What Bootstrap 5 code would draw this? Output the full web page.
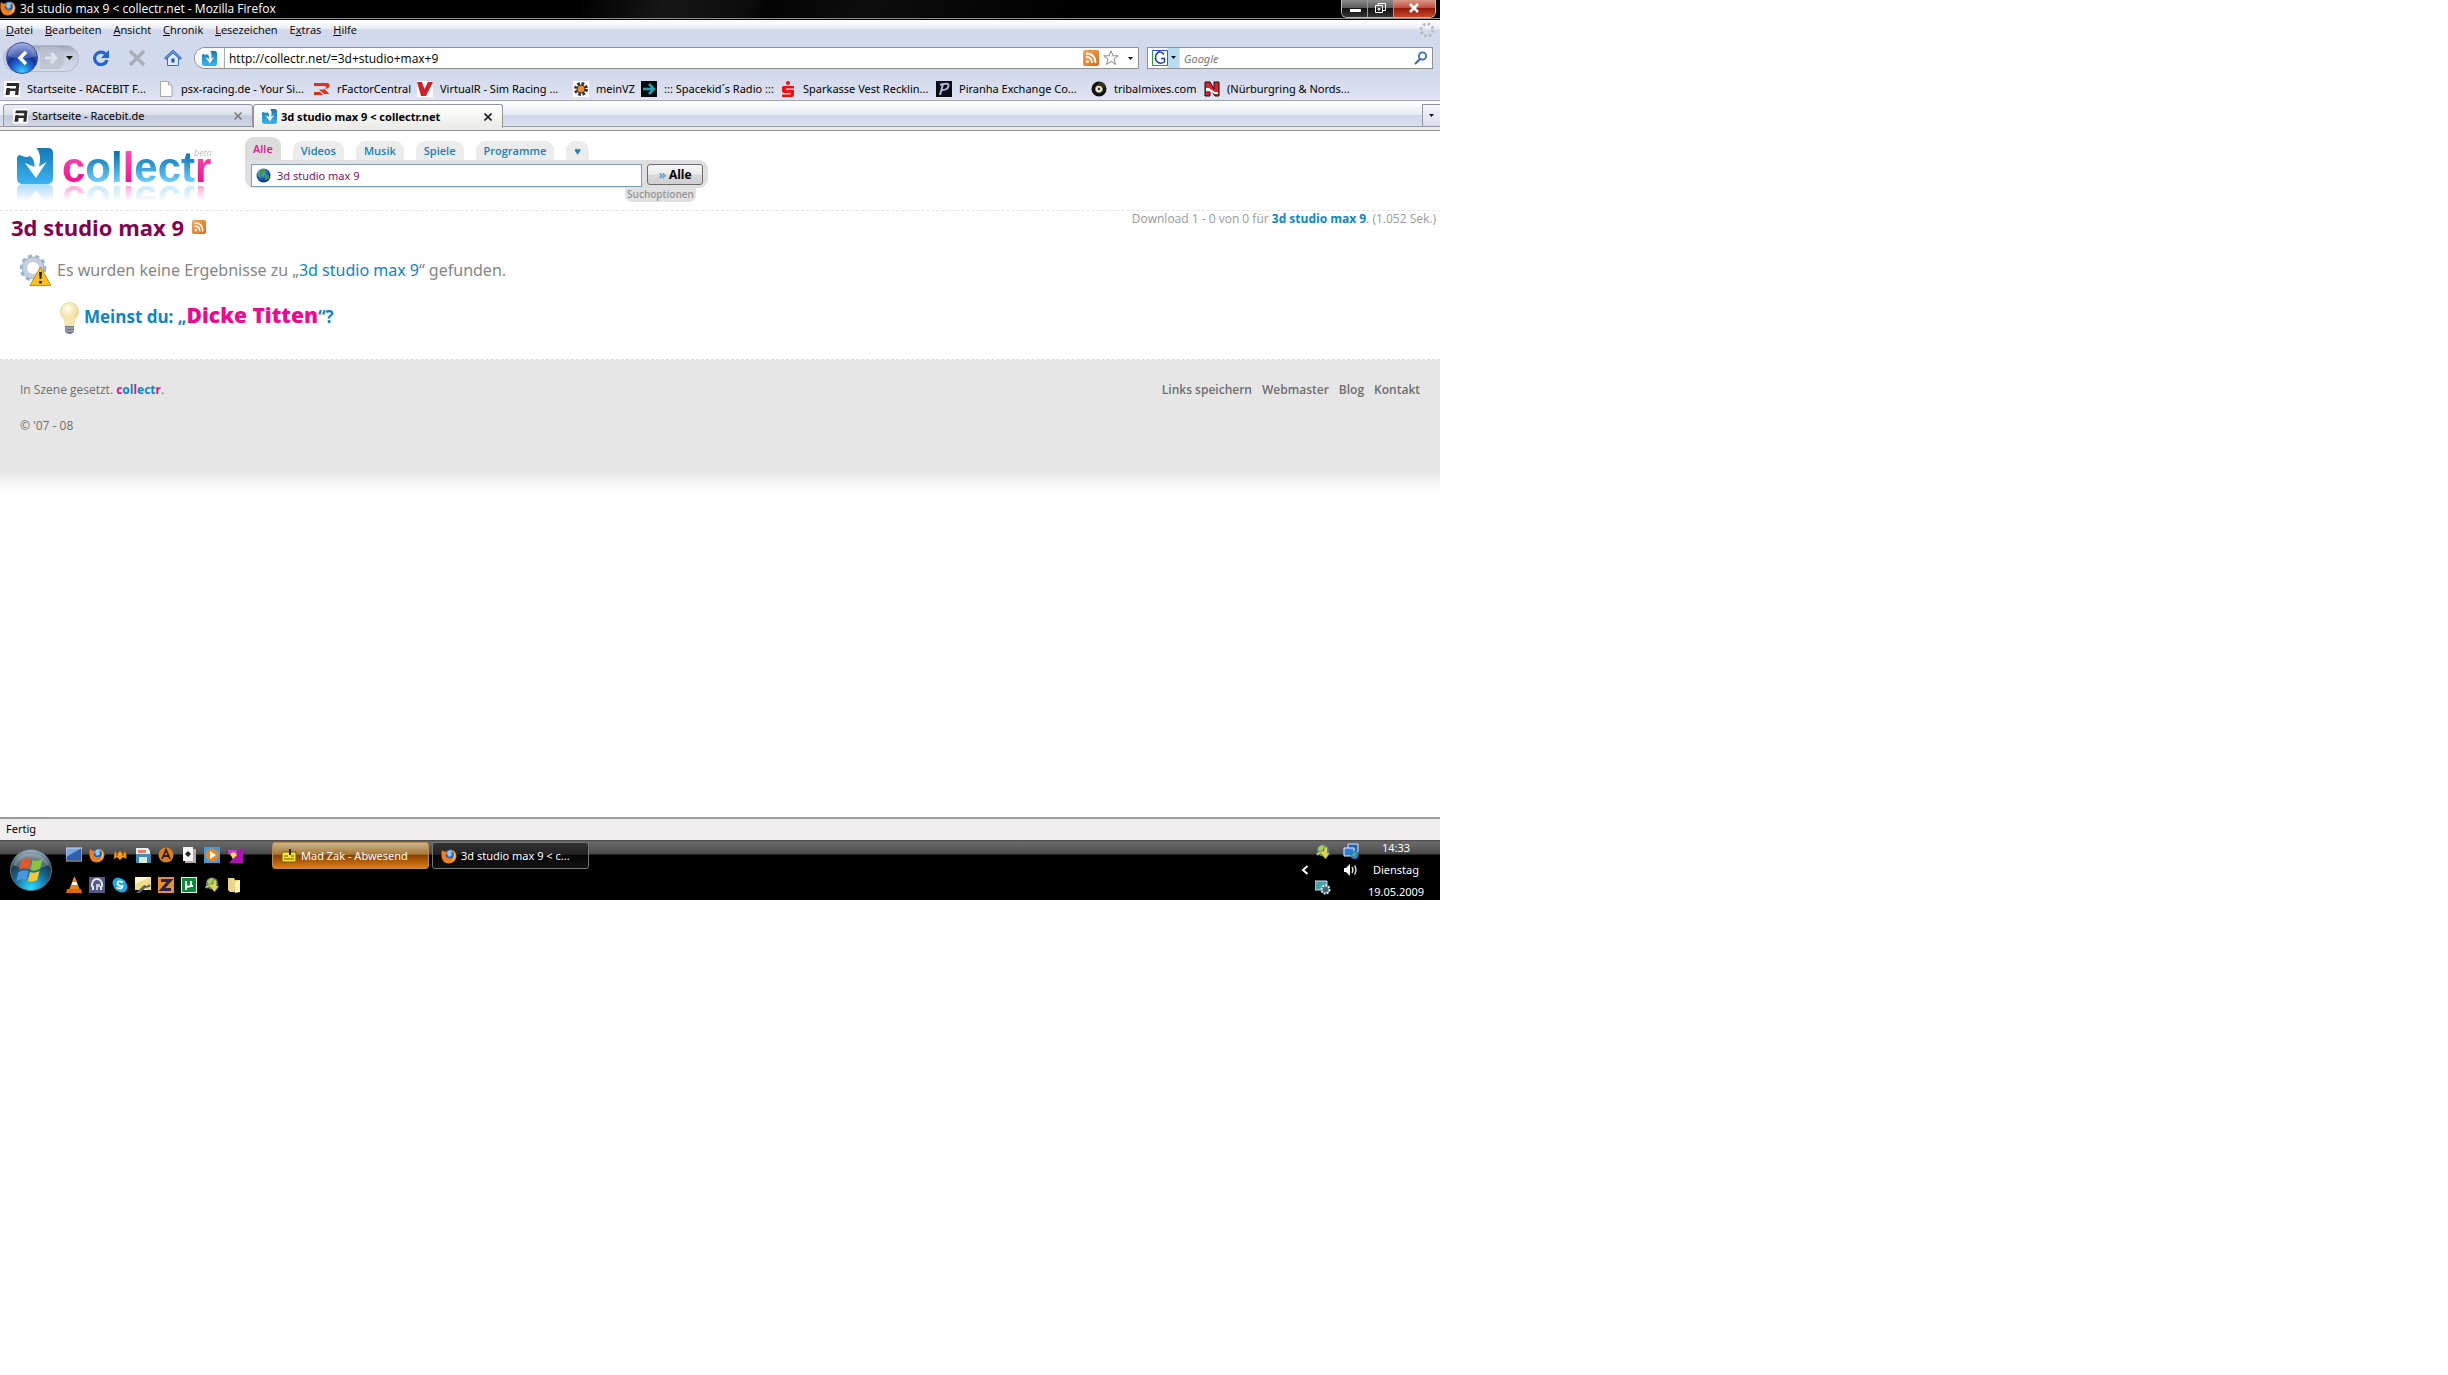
<!DOCTYPE html>
<html lang="de">
<head>
<meta charset="utf-8">
<meta name="viewport" content="width=device-width, initial-scale=1">
<title>3d studio max 9 &lt; collectr.net</title>
<link rel="stylesheet" href="https://cdn.jsdelivr.net/npm/bootstrap@5.3.0/dist/css/bootstrap.min.css">
<style>
body{background:#fff;color:#000;font:11px/16px "Noto Sans","Open Sans",sans-serif}
a{color:inherit;text-decoration:none}
svg{display:block;flex:none}
button{font:inherit;color:inherit;background:none;border:0;padding:0}
.desk{max-width:1440px;min-height:900px}
/* title bar */
.titlebar{height:20px;background:linear-gradient(105deg,#000 40%,#161616 46%,#0c0c0c 52%,#030303 53%,#0d0d0d 60%,#000 75%);color:#fff;border-bottom:1px solid #000;box-shadow:inset 0 -1px #8d8d8d;font:12px/18px "Open Sans",sans-serif}
.winbtns{width:95px;height:18px;border:1px solid #b9b9b9;border-top:0;border-radius:0 0 6px 6px;overflow:hidden}
.winbtns button{width:26px;border-right:1px solid #999;background:linear-gradient(#8b8b8b,#5c5c5c 45%,#111 50%,#333)}
.winbtns .shut{flex:1;border:0;background:linear-gradient(#d99787,#c05040 45%,#921a08 50%,#c8452b)}
/* chrome */
.menubar{height:21px;background:linear-gradient(#fff,#eef2f9 35%,#d3d9ec 50%,#d3d9ec);padding:0 5px 2px 6px}
.menuitems{gap:12px;font-family:"Open Sans",sans-serif}
.navbarrow{height:34px;background:#d3d9ec;padding:0 7px 0 3px}
.histpill{width:76px;height:27px;border-radius:14px;background:linear-gradient(#9fa6b8,#c3c9d8 30%,#d6dbe8);border:1px solid #b3b9c8;padding-right:1px}
.navico{width:36px}
.field{height:22px;background:#fff;border:1px solid #8e8f8f}
.field input{border:0;outline:0;background:none;padding:0;font:inherit;min-width:0;height:20px}
.urlfield{border-radius:11px 0 0 11px;font:12px "Open Sans",sans-serif;margin-left:3px}
.searchfield{width:286px;margin-left:8px}
.searchfield input::placeholder{color:#777;font-style:italic;opacity:1}
.favslot{width:30px;height:20px;border-right:1px solid #aaa;background:linear-gradient(#fff,#f1f3f8)}
.bookmarks{display:grid;grid-template-columns:154px 156px 103px 156px 68px 139px 156px 155px 113px 1fr;height:26px;padding-left:4px;background:linear-gradient(#d3d9ec,#dfe3f2);border-bottom:1px solid #a3a6ae;padding-top:2px}
.bookmarks a{display:flex;align-items:center;gap:7px;white-space:nowrap}
.tabstrip{height:30px;background:linear-gradient(#fff,#e9edf7 45%,#d0d6ea 52%,#dde1f0 85%,#dde1f0);padding:3px 0 0 3px;border-bottom:1px solid #8f8f8f;box-shadow:inset 0 -3px #ebebe8,inset 0 -4px #9a9ea8}
.wtab{width:250px;height:23px;border:1px solid #92959f;border-radius:3px 3px 0 0;padding:0 10px 0 9px;background:linear-gradient(#eceef4,#dadfe9 45%,#c3c9da 52%,#d3d7e4)}
.wtab.now{height:24px;background:linear-gradient(#fff,#ebebe8);border-bottom:0;font-weight:700;padding-left:8px}
.alltabs{width:18px;height:23px;border:1px solid #92959f;border-right:0;background:linear-gradient(#f6f7fb,#dadfee)}
/* site */
.site{background:#fff;font-family:"Open Sans","Noto Sans",sans-serif}
.sitehead{height:80px;border-bottom:1px dashed #e4e4e4;padding:6px 0 0 17px}
.brandbox{width:228px;padding-top:11px}
.brandbox svg{-webkit-box-reflect:below 0 linear-gradient(transparent 52%,rgba(0,0,0,.42))}
.cats{gap:12px}
.cat{background:#ececec;border-radius:9px 9px 0 0;height:19px;padding:0 8px;color:#1580be;font-weight:600;font-size:11px;line-height:19px}
.cat.on{background:#dcdcdc;color:#e8128a;height:23px;line-height:23px}
.finder{width:463px}
.finder form{height:28px;background:#dddfe3;border-radius:0 9px 9px 9px;padding:4px 5px 1px 6px}
.finder .q{width:391px;height:23px;background:#fff;border:1px solid #7f9db9;padding-left:4px;gap:6px}
.q input{flex:1;border:0;outline:0;padding:0;color:#84106a;font:11px "Noto Sans",sans-serif;height:20px}
.go{width:56px;height:21px;border:1px solid #6b6b6b;border-radius:3px;background:linear-gradient(#f6f6f6,#ebebeb 48%,#d8d8d8 52%,#cfcfcf);font-weight:700;font-size:12px;line-height:18px}
.go span{color:#4aa0dc}
.opts{background:#e1e1e1;border-radius:0 0 7px 7px;color:#969696;font-size:10px;font-weight:600;height:14px;line-height:13px;width:71px;margin-right:12px;text-align:center}
.titlerow{padding:0 4px 0 11px}
.term{color:#84004f;font-size:22px;line-height:32px;font-weight:700;margin:0}
.blue{color:#0b86c6}.pink{color:#ee0a90}
.count{color:#999;font-size:12px;line-height:16px}
.none{color:#868686;font:16px/34px "Noto Sans",sans-serif;padding-left:20px;gap:5px;margin-top:10px}
.meant{font-size:17px;line-height:28px;font-weight:700;padding-left:60px;gap:5px;margin-top:14px}
.meant b{font-size:21px}
.foot{height:132px;margin-top:24px;padding:20px 20px 0;background:linear-gradient(#e6e6e6 85%,#fff);border-top:1px dashed #ddd;color:#6e6e6e;font-size:12px;line-height:20px}
.foot p{margin:0 0 16px}
.foot nav{gap:10px;font-weight:600}
.status{height:23px;background:#f0eeee;border-top:2px solid #9a9a9a;padding:2px 6px}
.taskbar{height:60px;color:#fff;background:linear-gradient(#474747,#6a6a6a 2px,#4a4a4a 14px,#000 15px,#000)}
.quick{display:grid;grid-template-columns:repeat(8,23px);grid-template-rows:30px 30px;width:206px;align-items:center}
.tasks{padding-top:2px;gap:3px}
.task{width:157px;height:27px;border:1px solid #777;border-radius:3px;padding-left:8px;gap:4px;background:linear-gradient(#333,#222 45%,#050505 50%,#111)}
.task.alert-on{border-color:#b98c55;background:linear-gradient(#c9b58a,#a87838 45%,#8a4200 50%,#e07c10)}
.clock{width:74px;margin-right:7px;line-height:16px;gap:6px;text-align:center}
.tray{display:grid;grid-template-columns:16px 18px 28px;justify-items:end}
</style>
<script src="https://cdn.jsdelivr.net/npm/bootstrap@5.3.0/dist/js/bootstrap.bundle.min.js"></script>
</head>
<body>
<svg width="0" height="0" class="position-absolute" aria-hidden="true">
<defs>
<linearGradient id="gBlue" x1="0" y1="0" x2="0" y2="1"><stop offset="0" stop-color="#1479b4"/><stop offset="1" stop-color="#3bb4f2"/></linearGradient>
<linearGradient id="gBlueT" gradientUnits="userSpaceOnUse" x1="0" y1="3" x2="0" y2="34"><stop offset="0" stop-color="#0b6ea6"/><stop offset=".4" stop-color="#2a94cf"/><stop offset="1" stop-color="#6fcbfb"/></linearGradient>
<linearGradient id="gPinkT" gradientUnits="userSpaceOnUse" x1="0" y1="3" x2="0" y2="34"><stop offset="0" stop-color="#ff4fb0"/><stop offset="1" stop-color="#f5128f"/></linearGradient>
<radialGradient id="gBack" cx=".5" cy=".95" r=".9"><stop offset="0" stop-color="#35d3f7"/><stop offset=".35" stop-color="#1b6bd2"/><stop offset=".6" stop-color="#14309a"/><stop offset="1" stop-color="#7f92d6"/></radialGradient>
<radialGradient id="gOrb" cx=".5" cy=".95" r=".95"><stop offset="0" stop-color="#2ee0ff"/><stop offset=".4" stop-color="#1478a8"/><stop offset=".7" stop-color="#1d3c50"/><stop offset="1" stop-color="#a9bac4"/></radialGradient>
<radialGradient id="gGlobe" cx=".35" cy=".3" r=".8"><stop offset="0" stop-color="#8fd0ff"/><stop offset=".5" stop-color="#1c62b8"/><stop offset="1" stop-color="#0a2250"/></radialGradient>
<radialGradient id="gBulb" cx=".4" cy=".35" r=".7"><stop offset="0" stop-color="#fffef0"/><stop offset="1" stop-color="#ecd684"/></radialGradient>
<linearGradient id="gRss" x1="0" y1="0" x2="1" y2="1"><stop offset="0" stop-color="#f7a85a"/><stop offset="1" stop-color="#dc6a10"/></linearGradient>
<symbol id="fox" viewBox="0 0 16 16"><circle cx="8.500" cy="7.500" r="6" fill="#2b62b8"/><path d="M7 3q3-2 5 1l-2 1 1 2-3 2-2-3z" fill="#8cc8f2"/><path d="M1 2l3 2q2-1 3 0L5 6q-1 3 2 4 3 1 5-1-1 3-4 3 5 0 5-6-1-3-3-5 5 2 5.500 7Q15 15 8 15.500 1 15 .500 8.500 0 5 1 2z" fill="#ee7e1c"/><path d="M12.500 3q2 2 2 5-1 5-6 6 5-3 4.500-8z" fill="#fbc843"/></symbol>
<symbol id="cmark" viewBox="0 0 36 36"><path d="M0 10Q1 6 4 7.500 9 10 13 8q5 3 4.500 11L8 15l11 15L29.500 14 22 18.500Q25 6 19.500 0H31q5 0 5 5v25q0 6-6 6H6q-6 0-6-6z" fill="url(#gBlue)"/></symbol>
<symbol id="rbit" viewBox="0 0 16 16"><path fill="#fff" d="M0 0h16v16H0z"/><path d="M3 2h11.500q1 0 .800 1.500L14.300 14H11l.400-4H6l-.500 4H1.500L2.500 7H6l-.200.500h6l.300-2.500H2.500z" fill="#2a2a2a"/></symbol>
<symbol id="rss" viewBox="0 0 16 16"><rect width="16" height="16" rx="2" fill="url(#gRss)"/><circle cx="4.500" cy="11.500" r="1.500" fill="#fff"/><path d="M3 7q6 0 6 6M3 3.500q9.500 0 9.500 9.500" fill="none" stroke="#fff" stroke-width="1.800"/></symbol>
<symbol id="dl" viewBox="0 0 16 16"><circle cx="8" cy="6.500" r="6" fill="#5b7f9c"/><path d="M3 4q3-4 7-2L7 7 4 7z" fill="#a9cf5a"/><path d="M1 10q4-4 8-3V3h3.500v6H15l-4.500 6L6 9.500q-2 0-3 2z" fill="#d8d456" stroke="#6b7a22" stroke-width=".6"/></symbol>
</defs></svg>

<div class="desk d-flex flex-column">
<header class="titlebar d-flex align-items-start">
  <svg width="16" height="16"><use href="#fox"/></svg>
  <div class="flex-grow-1 ps-1 text-truncate">3d studio max 9 &lt; collectr.net - Mozilla Firefox</div>
  <div class="winbtns d-flex me-1">
    <button aria-label="Minimieren"><svg width="25" height="16"><rect x="8" y="8" width="11" height="3" fill="#fff"/></svg></button>
    <button aria-label="Wiederherstellen"><svg width="25" height="16" fill="none" stroke="#fff"><path d="M10 5V2.500h7.500v7H15M7.500 4.500h7v7h-7zM10 7.500h2v1.500h-2z"/></svg></button>
    <button class="shut" aria-label="Schließen"><svg width="42" height="16"><path d="M16 3l8 8M24 3l-8 8" stroke="#fff" stroke-width="2.600"/></svg></button>
  </div>
</header>

<nav class="menubar d-flex align-items-center" aria-label="Menü">
  <div class="menuitems d-flex flex-grow-1">
  <a href="#"><u>D</u>atei</a><a href="#"><u>B</u>earbeiten</a><a href="#"><u>A</u>nsicht</a><a href="#"><u>C</u>hronik</a><a href="#"><u>L</u>esezeichen</a><a href="#">E<u>x</u>tras</a><a href="#"><u>H</u>ilfe</a>
  </div>
  <svg width="16" height="16"><circle cx="8" cy="8" r="6" fill="none" stroke="#b8bac0" stroke-width="3" stroke-dasharray="2.500 2.200"/></svg>
</nav>

<div class="navbarrow d-flex align-items-center">
  <div class="histpill d-flex align-items-center">
    <button aria-label="Zurück"><svg width="36" height="34"><circle cx="18" cy="17" r="15.500" fill="url(#gBack)" stroke="#3b4f9c"/><path d="M4 15a14 13 0 0 1 28 0q-14 5-28 0z" fill="#fff" opacity=".22"/><path d="M22 11l-6 6 6 6" fill="none" stroke="#fff" stroke-width="3.500"/></svg></button>
    <button aria-label="Vor"><svg width="24" height="22"><path d="M0 0h18q6 0 6 11t-6 11H0z" fill="#b9bfcd" opacity=".7"/><path d="M5 11h10M11 6l5 5-5 5" fill="none" stroke="#dfe3ec" stroke-width="3"/></svg></button>
    <button class="ms-auto me-1" aria-label="Verlauf"><svg width="7" height="5"><path d="M0 0h7L3.500 4z" fill="#111"/></svg></button>
  </div>
  <button class="navico ms-1" aria-label="Neu laden"><svg class="mx-auto" width="18" height="18"><path d="M13.500 5A6.300 6.300 0 1 0 15 11" fill="none" stroke="#1f66d0" stroke-width="3.200"/><path d="M17 1v8H9z" fill="#1f66d0"/></svg></button>
  <button class="navico" aria-label="Stopp"><svg class="mx-auto" width="18" height="18"><path d="M2 2l14 14M16 2L2 16" stroke="#a9adb8" stroke-width="3.200"/></svg></button>
  <button class="navico" aria-label="Startseite"><svg class="mx-auto" width="18" height="18"><path d="M3.500 8v8.500h11V8L9 3z" fill="#dce9fb" stroke="#3b6cc4"/><path d="M.500 9L9 1l8.500 8-1.500 1.500L9 4 2 10.500z" fill="#5e93e2" stroke="#2c5cb4" stroke-width=".8"/><path d="M7.500 9.500h3v4h-3z" fill="#2450a8"/></svg></button>
  <div class="field urlfield d-flex align-items-center flex-grow-1 overflow-hidden">
    <span class="favslot d-flex align-items-center justify-content-center"><svg width="15" height="15"><use href="#cmark"/></svg></span>
    <input class="flex-grow-1 ps-1" aria-label="Adresse" value="http://collectr.net/=3d+studio+max+9">
    <svg width="16" height="16"><use href="#rss"/></svg>
    <svg class="ms-1" width="16" height="16"><path d="M8 .800l2 5h5.200l-4.200 3.400 1.600 5.300L8 11.400l-4.600 3.100L5 9.200.800 5.800H6z" fill="#fafafa" stroke="#8a8a8a"/></svg>
    <svg class="ms-2 me-1" width="7" height="5"><path d="M1 1h5L3.500 4z" fill="#111"/></svg>
  </div>
  <div class="field searchfield d-flex align-items-center">
    <svg class="ms-1" width="16" height="16"><path d="M.500 15V.500h15" fill="none" stroke="#2a50c8"/><path d="M15.500.500v15" stroke="#d42a2a"/><path d="M.500 1v14.500h15" fill="none" stroke="#2aa02a"/><path d="M12 4.500Q8-.500 4.500 4q-2 4 0 7 3.500 4 8 1V8.500H9" fill="none" stroke="#1c3fb0" stroke-width="1.500"/></svg>
    <svg width="11" height="20"><path fill="#b8dcf0" d="M0 0h11v20H0z"/><path d="M3 8h5l-2.500 3z" fill="#111"/></svg>
    <input class="flex-grow-1 ps-1 border-start" aria-label="Suche" placeholder="Google">
    <svg class="me-1" width="14" height="14"><circle cx="8.500" cy="5" r="3.600" fill="none" stroke="#3b6cb0" stroke-width="1.800"/><path d="M6 8l-5 5" stroke="#3b6cb0" stroke-width="2.200"/></svg>
  </div>
</div>

<nav class="bookmarks" aria-label="Lesezeichen">
  <a href="#"><svg width="16" height="16"><use href="#rbit"/></svg>Startseite - RACEBIT F...</a>
  <a href="#"><svg width="16" height="16"><path d="M2.500.500h8l3.500 3.500v11.500H2.500z" fill="#fdfdfd" stroke="#a8a8a8"/><path d="M10.500.500V4H14" fill="none" stroke="#a8a8a8"/></svg>psx-racing.de - Your Si...</a>
  <a href="#"><svg width="16" height="16" fill="#e03018"><path d="M0 2h13q3 0 2.500 3-.500 2.500-5 3l5 5h-5.500L5 8.500q6 .500 7-1.500T9 5H0z"/><path d="M0 11h6l3 3H0z"/></svg>rFactorCentral</a>
  <a href="#"><svg width="16" height="16"><path fill="#fff" d="M0 0h16v16H0z"/><path d="M0 1h5l2.500 7L11 1h5L9 15H4z" fill="#d4202a"/></svg>VirtualR - Sim Racing ...</a>
  <a href="#"><svg width="16" height="16"><path fill="#fff" d="M0 0h16v16H0z"/><circle cx="8" cy="8" r="5.500" fill="none" stroke="#333" stroke-width="3" stroke-dasharray="2.600 1.700"/><circle cx="8" cy="8" r="4" fill="#f08a2c" stroke="#333"/></svg>meinVZ</a>
  <a href="#"><svg width="16" height="16"><path fill="#05080c" d="M0 0h16v16H0z"/><path d="M2 8h10M8 3l5 5-5 5" fill="none" stroke="#2a9fb4" stroke-width="2.500"/></svg>::: Spacekid´s Radio :::</a>
  <a href="#"><svg width="16" height="16" fill="#f01010"><circle cx="8" cy="2" r="2"/><path d="M3 5h11v2.500H6V9h8v5q0 2-2 2H2v-2.500h8.500V12H4q-2 0-2-2V6z"/></svg>Sparkasse Vest Recklin...</a>
  <a href="#"><svg width="16" height="16"><path fill="#0c0c14" d="M0 0h16v16H0z"/><path d="M4 14L7 3M4 4q9-3 8.500 1-.500 4-6.500 4" fill="none" stroke="#b8b4e0" stroke-width="2"/></svg>Piranha Exchange Co...</a>
  <a href="#"><svg width="16" height="16"><circle cx="8" cy="8" r="7.500" fill="#111"/><circle cx="8" cy="8" r="3.500" fill="#fff" stroke="#a89a60"/><path d="M8 1q5 0 6.500 5l-3 1Q10 4 7 5z" fill="#3a3218"/><circle cx="8" cy="8" r="1.400" fill="#333"/></svg>tribalmixes.com</a>
  <a href="#"><svg width="16" height="16"><path d="M1 1h5l4 7V1h5v14h-4L6 8v7H1z" fill="#e0202c" stroke="#111"/><path d="M2 7h3l6 4h3v2h-3L5 10H2z" fill="#fff"/></svg>(Nürburgring &amp; Nords...</a>
</nav>

<div class="tabstrip d-flex align-items-start">
  <div class="wtab d-flex align-items-center"><svg class="me-1" width="15" height="16"><use href="#rbit"/></svg><a href="#" class="flex-grow-1">Startseite - Racebit.de</a><button aria-label="Tab schließen"><svg width="8" height="8"><path d="M.500.500l7 7M7.500.500l-7 7" stroke="#777" stroke-width="1.500"/></svg></button></div>
  <div class="wtab now d-flex align-items-center"><svg class="me-1" width="15" height="15"><use href="#cmark"/></svg><a href="#" class="flex-grow-1">3d studio max 9 &lt; collectr.net</a><button aria-label="Tab schließen"><svg width="8" height="8"><path d="M.500.500l7 7M7.500.500l-7 7" stroke="#222" stroke-width="1.700"/></svg></button></div>
  <button class="alltabs ms-auto" aria-label="Alle Tabs"><svg class="mx-auto" width="5" height="3"><path d="M0 0h5L2.500 3z" fill="#111"/></svg></button>
</div>

<main class="site d-flex flex-column flex-grow-1">
  <div class="sitehead d-flex">
    <a href="#" class="brandbox" aria-label="collectr beta">
      <svg width="200" height="36" overflow="visible"><use href="#cmark" width="36" height="36"/>
      <text x="45" y="34" font-family="Liberation Sans,Arial,sans-serif" font-weight="700" font-size="42" fill="url(#gBlueT)"><tspan fill="url(#gPinkT)">c</tspan>ol<tspan fill="url(#gPinkT)">l</tspan>ect<tspan fill="url(#gPinkT)">r</tspan></text>
      <text x="177" y="8" font-family="Open Sans,sans-serif" font-size="9" font-style="italic" fill="#bcbcbc">beta</text></svg>
    </a>
    <div class="finder">
      <nav class="cats d-flex align-items-end" aria-label="Kategorien">
        <a href="#" class="cat on">Alle</a><a href="#" class="cat">Videos</a><a href="#" class="cat">Musik</a><a href="#" class="cat">Spiele</a><a href="#" class="cat">Programme</a><a href="#" class="cat">♥</a>
      </nav>
      <form class="d-flex justify-content-between align-items-start">
        <div class="q d-flex align-items-center">
          <svg width="15" height="15"><circle cx="7.500" cy="7.500" r="7" fill="url(#gGlobe)"/><path d="M4 2q5-2 6 1L7 6 5 9Q1 7 4 2zM9 7q5-1 4 3l-4 3z" fill="#3c9c3c"/></svg>
          <input aria-label="Suchbegriff" value="3d studio max 9">
        </div>
        <button type="button" class="go"><span>»</span> Alle</button>
      </form>
      <div class="d-flex justify-content-end"><a href="#" class="opts">Suchoptionen</a></div>
    </div>
  </div>

  <div class="titlerow d-flex justify-content-between align-items-start">
    <div class="d-flex align-items-center"><h1 class="term">3d studio max 9</h1><a href="#" class="ms-2" aria-label="RSS"><svg width="14" height="14"><use href="#rss"/></svg></a></div>
    <div class="count">Download 1 - 0 von 0 für <a href="#" class="blue fw-bold">3d studio max 9</a>. (1.052 Sek.)</div>
  </div>
  <div class="none d-flex align-items-center">
    <svg width="32" height="34"><circle cx="13" cy="15" r="11.500" fill="none" stroke="#a4b6cc" stroke-width="4" stroke-dasharray="4 3"/><circle cx="13" cy="15" r="8.500" fill="none" stroke="#c3d0e0" stroke-width="5"/><circle cx="13" cy="15" r="11" fill="none" stroke="#8fa3bd" stroke-width=".8"/><path d="M20.500 14L31 32.500H10z" fill="#fbc022" stroke="#c98a10" stroke-linejoin="round"/><path d="M19 19h3l-.600 7h-1.800zM19.200 28h2.600v2.500h-2.600z" fill="#222"/></svg>
    <div>Es wurden keine Ergebnisse zu „<a href="#" class="blue">3d studio max 9</a>“ gefunden.</div>
  </div>
  <div class="meant blue d-flex align-items-start">
    <svg width="19" height="34"><circle cx="9.500" cy="10.500" r="9" fill="url(#gBulb)" stroke="#e0cf90" stroke-width=".8"/><path d="M3 16h13l-2 9H5z" fill="#f4e6ac"/><path d="M5 25h9v6q-4 4-9 0z" fill="#6e7884"/><path d="M5 27h9M5 30h9" stroke="#b9c2cc"/></svg>
    <div>Meinst du: „<a href="#" class="pink"><b>Dicke Titten</b></a>“?</div>
  </div>

  <footer class="foot d-flex justify-content-between align-items-start">
    <div><p>In Szene gesetzt. <a href="#" class="fw-bold blue"><span class="pink">c</span>ol<span class="pink">l</span>ect<span class="pink">r</span></a>.</p><p>© '07 - 08</p></div>
    <nav class="d-flex"><a href="#">Links speichern</a><a href="#">Webmaster</a><a href="#">Blog</a><a href="#">Kontakt</a></nav>
  </footer>
</main>

<div class="status">Fertig</div>

<div class="taskbar d-flex">
  <button class="ps-2 pe-2" aria-label="Start"><svg width="46" height="46"><circle cx="23" cy="23" r="20.500" fill="url(#gOrb)" stroke="#5d707c"/><path d="M5 18a19 17 0 0 1 36 0q-18 8-36 0z" fill="#fff" opacity=".25"/><path d="M13.500 13q5-3 9.500-1l-2.200 10q-5-2-9.800 1z" fill="#e8572a"/><path d="M24.500 13q5 2 10-1l-2.500 10q-5 3-9.700 1z" fill="#8ac43c"/><path d="M10.500 25q5-3 9.800-1l-2.200 9q-5-2-9.600 1z" fill="#4f96e0"/><path d="M22 25q4.500 2 9.500-1l-2.200 9q-5 3-9.500 1z" fill="#f7c52c"/></svg></button>
  <div class="quick ms-1">
    <svg width="16" height="16"><path d="M0 1h16v12H0z" fill="#2f5fb0"/><path d="M0 1h16L0 10z" fill="#7aa6dc"/><path d="M0 1h16v13H0z" fill="none" stroke="#c9d6ea"/></svg>
    <svg width="16" height="16"><use href="#fox"/></svg>
    <svg width="16" height="16"><path d="M3 4q2 2 2 5 .500-4 3-5 2.500 1 3 5 0-3 2-5 2 3 1 8l-3-2-3 3-3-3-3 2Q2 7 3 4z" fill="#f2a018" stroke="#b05008" stroke-width=".6"/></svg>
    <svg width="16" height="16"><path d="M1 1h12l2 3v12H1z" fill="#e9eef2"/><path d="M3 3h8v3H3z" fill="#e08060"/><path d="M1 7h15v9H1z" fill="#3e8ab4"/><path d="M4 10h8v6H4z" fill="#d9ead2"/></svg>
    <svg width="16" height="16"><circle cx="8" cy="8" r="7.500" fill="#d8801c"/><path d="M4 12l4-9 4 9M5.500 9h5" fill="none" stroke="#3a1c04" stroke-width="1.800"/></svg>
    <svg width="16" height="16"><path d="M4 2h11v14H4z" fill="#b8a8a8"/><path d="M2 0h10v14H2z" fill="#f5f5f5"/><path d="M7 4l3 3-3 3-3-3z" fill="#222"/></svg>
    <svg width="16" height="16"><path d="M0 0h16v16H0z" fill="#3f9ae0"/><circle cx="8" cy="8" r="6.500" fill="#ee8420"/><path d="M6 4l6 4-6 4z" fill="#fff"/></svg>
    <svg width="16" height="16"><path d="M16 0v16H2z" fill="#b010b8"/><path d="M1 3h9v4H1z" fill="#c83cd0"/><path d="M3 7l4-2 3 3-4 4z" fill="#fbe23c"/></svg>
    <svg width="16" height="16"><path d="M8 0h1l5 13H3z" fill="#f08018"/><path d="M6.500 5h4l1 3h-6z" fill="#fff"/><path d="M1 12h14l1 4H0z" fill="#e06a08"/></svg>
    <svg width="16" height="16"><path d="M0 0h16v16H0z" fill="#565a80"/><path d="M3 10V7q1-5 5-5t5 5v3M4 9v4M12 9v4" fill="none" stroke="#e4e4f0" stroke-width="2"/><path d="M7 7h4v3H9v3H7z" fill="#c8c8dc"/></svg>
    <svg width="16" height="16"><circle cx="6" cy="6" r="5.500" fill="#1ca8e8"/><circle cx="10" cy="10" r="5.500" fill="#1ca8e8"/><circle cx="8" cy="8" r="6.500" fill="#1ca8e8"/><path d="M11 5.500Q6 3 5.500 6t5 3q0 4-6 1.500" fill="none" stroke="#fff" stroke-width="1.800"/></svg>
    <svg width="16" height="16"><path d="M0 0h16v13H0z" fill="#f0dc88"/><path d="M0 0h16L0 7z" fill="#fdf4c8"/><path d="M1 16l8-8 3 1 3-2v3l-5 1-5 5z" fill="#5a5e68"/></svg>
    <svg width="16" height="16"><path d="M0 0h16v16H0z" fill="#e8902a"/><path d="M3 3.500h9L4 12.500h9" fill="none" stroke="#2a2050" stroke-width="3"/></svg>
    <svg width="16" height="16"><path d="M0 0h16v16H0z" fill="#e8f4e8"/><path d="M1 1h14v14H1z" fill="#0e8a3c"/><path d="M5 13V4M5 9q3 2 5-1V4v5h2" fill="none" stroke="#fff" stroke-width="1.800"/></svg>
    <svg width="16" height="16"><use href="#dl"/></svg>
    <svg width="16" height="16"><path d="M1 1h6l1 2h5v12H3l-2-2z" fill="#e8d684"/><path d="M8 5l5-2v12l-5 1z" fill="#fbf0b4"/></svg>
  </div>
  <div class="tasks d-flex flex-grow-1 align-items-start">
    <button class="task alert-on d-flex align-items-center"><svg width="16" height="16"><path d="M1 4h14v10H1z" fill="#fce42c" stroke="#6a5a00"/><path d="M3 8h4M3 11h10M10 8h3" stroke="#6a5a00"/><path d="M8 1h2v6H8z" fill="#222"/></svg>Mad Zak - Abwesend</button>
    <button class="task d-flex align-items-center"><svg width="16" height="16"><use href="#fox"/></svg>3d studio max 9 &lt; c...</button>
  </div>
  <div class="tray align-content-center">
    <span></span><svg width="16" height="18"><use href="#dl"/></svg><svg width="16" height="18"><path d="M5 1h10v8H5z" fill="#1c66b8" stroke="#dde"/><path d="M1 5h10v8H1z" fill="#2a80d8" stroke="#eef"/><circle cx="11.500" cy="12" r="4" fill="#2e78d8"/><path d="M9 12q2-4 4-2l-1 4z" fill="#4ec04a"/></svg>
    <svg width="12" height="18"><path d="M6.500 5L2 9l4.500 4" fill="none" stroke="#fff" stroke-width="2"/></svg><span></span><svg width="16" height="18"><path d="M1 7h2l4-4v12l-4-4H1z" fill="#fff"/><path d="M9 6q2 3 0 6M11.500 4.500q3 4.500 0 9" fill="none" stroke="#cfe8cf" stroke-width="1.400"/></svg>
    <span></span><svg width="16" height="18"><path d="M0 2h12v9H0z" fill="#4aa0a8" stroke="#cde"/><circle cx="10.500" cy="10.500" r="4" fill="#3c6878" stroke="#e6eef2" stroke-width="2" stroke-dasharray="2 1"/></svg><span></span>
  </div>
  <div class="clock d-flex flex-column"><div>14:33</div><div>Dienstag</div><div>19.05.2009</div></div>
</div>
</div>
</body>
</html>
